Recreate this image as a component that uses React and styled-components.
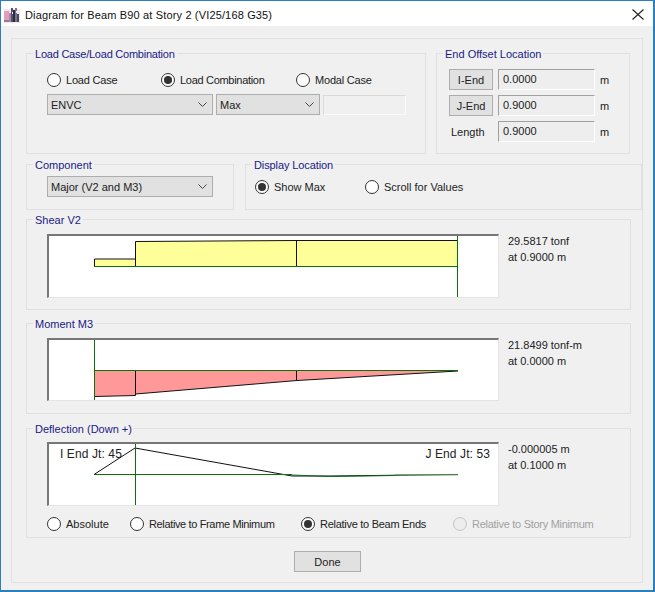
import React from "react";
import styled, { createGlobalStyle } from "styled-components";

const Global = createGlobalStyle`
  html, body { margin: 0; padding: 0; background: #f0f0f0; }
  * { box-sizing: border-box; }
`;

const Window = styled.div`
  width: 655px;
  height: 592px;
  display: flex;
  flex-direction: column;
  background: #f0f0f0;
  border: 1px solid #2b7ec0;
  border-width: 1px 2px 2px 1px;
  font: 11px "Liberation Sans", Arial, sans-serif;
  color: #222;
  overflow: hidden;
  white-space: nowrap;
`;
const TitleBar = styled.div`
  height: 25px;
  flex: none;
  background: #fff;
  display: flex;
  align-items: center;
  padding: 2px 9px 0 3px;
  gap: 5px;
`;
const Title = styled.span`
  flex: 1;
  color: #111;
  letter-spacing: 0.15px;
`;
const Client = styled.div`
  flex: 1;
  padding: 12px 10px 7px 10px;
  display: flex;
`;
const Frame = styled.div`
  flex: 1;
  border: 1px solid #e2e2e2;
  padding: 14px 11px 0 14px;
  display: flex;
  flex-direction: column;
`;
const Row = styled.div`
  display: flex;
  gap: ${(p) => p.$gap ?? 10}px;
  margin-top: ${(p) => p.$top ?? 0}px;
`;
const Group = styled.div`
  position: relative;
  flex: ${(p) => (p.$grow ? 1 : "none")};
  width: ${(p) => (p.$w ? p.$w + "px" : "auto")};
  height: ${(p) => p.$h}px;
  margin-top: ${(p) => p.$top ?? 0}px;
  margin-right: ${(p) => p.$right ?? 0}px;
  border: 1px solid #e0e0e0;
  padding: ${(p) => p.$pad};
`;
const Legend = styled.span`
  position: absolute;
  left: 6px;
  top: -7px;
  padding: 0 2px;
  line-height: 14px;
  background: #f0f0f0;
  color: #1a1a86;
  letter-spacing: ${(p) => p.$spacing ?? 0}px;
`;
const RadioRow = styled.div`
  display: flex;
  height: 14px;
  align-items: center;
  margin-top: ${(p) => p.$top ?? 0}px;
`;
const Option = styled.label`
  display: flex;
  align-items: center;
  gap: 5px;
  width: ${(p) => p.$w}px;
  flex: none;
  color: ${(p) => (p.$off ? "#a0a0a0" : "#222")};
  letter-spacing: ${(p) => p.$spacing ?? 0}px;
`;
const Radio = styled.span`
  width: 14px;
  height: 14px;
  flex: none;
  border-radius: 50%;
  border: 1px solid ${(p) => (p.$off ? "#c4c4c4" : "#333")};
  background: ${(p) => (p.$off ? "#ededed" : "#fff")};
  display: flex;
  align-items: center;
  justify-content: center;
  &::after {
    content: "";
    width: 8px;
    height: 8px;
    border-radius: 50%;
    background: #333;
    display: ${(p) => (p.$on ? "block" : "none")};
  }
`;
const Select = styled.div`
  width: ${(p) => p.$w}px;
  height: 21px;
  flex: none;
  background: #e1e1e1;
  border: 1px solid #adadad;
  display: flex;
  align-items: center;
  justify-content: space-between;
  padding: 0 5px 0 3px;
`;
const ComboRow = styled.div`
  display: flex;
  gap: 3px;
  margin-top: 7px;
`;
const BlankInput = styled.div`
  width: 83px;
  height: 20px;
  margin-top: 1px;
  background: #f0f0f0;
  border: 1px solid #d9d9d9;
  border-right-color: #fafafa;
  border-bottom-color: #fafafa;
`;
const OffsetRow = styled.div`
  display: flex;
  align-items: center;
  height: 21px;
  margin-bottom: 5px;
`;
const EndButton = styled.div`
  width: 44px;
  height: 21px;
  flex: none;
  background: #e1e1e1;
  border: 1px solid #adadad;
  display: flex;
  align-items: center;
  justify-content: center;
  margin-right: 5px;
`;
const RowLabel = styled.span`
  width: 44px;
  margin-right: 5px;
  padding-left: 2px;
`;
const ValueInput = styled.div`
  width: 97px;
  height: 21px;
  flex: none;
  background: #eeeeee;
  border: 1px solid #fff;
  border-top-color: #a0a0a0;
  border-left-color: #a0a0a0;
  padding-left: 4px;
  line-height: 18px;
`;
const Unit = styled.span`
  margin-left: 5px;
`;
const PlotRow = styled.div`
  display: flex;
  gap: 9px;
`;
const Plot = styled.div`
  position: relative;
  width: 452px;
  height: ${(p) => p.$h}px;
  flex: none;
  background: #fff;
  border: 1px solid #e4e4e4;
  border-top: 2px solid #777;
  border-left: 2px solid #777;
`;
const PlotSvg = styled.svg`
  display: block;
  width: 100%;
  height: 100%;
`;
const PlotLabel = styled.span`
  position: absolute;
  top: 3px;
  font-size: 12px;
  line-height: 15px;
  letter-spacing: 0.1px;
  color: #222;
  ${(p) => (p.$right ? "right: 8px;" : "left: 11px;")}
`;
const Values = styled.div`
  line-height: 16px;
  margin-top: -1px;
`;
const Footer = styled.div`
  display: flex;
  justify-content: center;
  margin-top: 13px;
  padding-right: 2px;
`;
const DoneButton = styled.div`
  width: 67px;
  height: 21px;
  background: #e1e1e1;
  border: 1px solid #adadad;
  display: flex;
  align-items: center;
  justify-content: center;
`;

const Chevron = () => (
  <svg width="9" height="5" viewBox="0 0 9 5">
    <path d="M.5 .5 4.5 4.5 8.5 .5" fill="none" stroke="#444" strokeWidth="1" />
  </svg>
);
const AppIcon = () => (
  <svg width="16" height="16" viewBox="0 0 16 16">
    <rect x="0" y="2" width="16" height="14" fill="#f3e6ee" />
    <rect x="0" y="4" width="5" height="9" fill="#e79abb" />
    <rect x="0" y="13" width="5" height="2" fill="#8d7f9c" />
    <rect x="5" y="6" width="2" height="9" fill="#9a90a8" />
    <rect x="7" y="1" width="2" height="14" fill="#55506a" />
    <rect x="9" y="3" width="2" height="12" fill="#2e2c40" />
    <rect x="11" y="1" width="2" height="14" fill="#77748c" />
    <rect x="13" y="7" width="2" height="8" fill="#4a4860" />
    <rect x="8" y="5" width="1" height="2" fill="#f5f1f5" />
    <rect x="12" y="4" width="1" height="2" fill="#f5f1f5" />
  </svg>
);
const CloseIcon = () => (
  <svg width="12" height="11" viewBox="0 0 12 11">
    <path d="M.5 .5 11.5 10.5M11.5 .5 .5 10.5" stroke="#222" strokeWidth="1.1" fill="none" />
  </svg>
);

const Green = "#0b720b";
const ShearChart = () => (
  <PlotSvg viewBox="49 236 449 61" preserveAspectRatio="none">
    <path d="M94.5 259H135.5V241.5L297 240.5H457.5V266.5H94.5Z" fill="#ffff99" />
    <path d="M94.5 266V259H135.5M135.5 266V241.5L297 240.5H457.5M296.5 241V266" fill="none" stroke="#111" />
    <path d="M94 266.5H457.5M457.5 236V297" fill="none" stroke={Green} />
  </PlotSvg>
);
const MomentChart = () => (
  <PlotSvg viewBox="49 340 449 60" preserveAspectRatio="none">
    <path d="M94.5 370.5V396.5L135.5 395.5V394L297 380.5L458 371Z" fill="#ff9999" />
    <path d="M94.5 396.5 135.5 395.5V370.5M135.5 394 297 380.5 458 371M296.5 370.5V381" fill="none" stroke="#111" />
    <path d="M94.5 340V400M94 370.5H458" fill="none" stroke={Green} />
  </PlotSvg>
);
const DeflectionChart = () => (
  <PlotSvg viewBox="49 444 449 61" preserveAspectRatio="none">
    <path d="M94 474.5 135 448 292 476H330L458 474.5" fill="none" stroke="#111" />
    <path d="M135.5 444V505M94 474.5H292" fill="none" stroke={Green} />
    <path d="M292 475 330 476.5 395 475.5" fill="none" stroke="#15691a" strokeWidth="1.2" />
    <path d="M395 474.8H458" fill="none" stroke="#5aa55a" />
  </PlotSvg>
);

const Opt = ({ w, on, off, spacing, children }) => (
  <Option $w={w} $off={off} $spacing={spacing}>
    <Radio $on={on} $off={off} />
    {children}
  </Option>
);

export default function App() {
  return (
    <>
      <Global />
      <Window>
        <TitleBar>
          <AppIcon />
          <Title>Diagram for Beam B90 at Story 2 (VI25/168 G35)</Title>
          <CloseIcon />
        </TitleBar>
        <Client>
          <Frame>
            <Row>
              <Group $w={400} $h={101} $pad="19px 0 0 20px">
                <Legend $spacing={-0.23}>Load Case/Load Combination</Legend>
                <RadioRow>
                  <Opt w={114} spacing={-0.2}>Load Case</Opt>
                  <Opt w={135} on spacing={-0.3}>Load Combination</Opt>
                  <Opt w={110} spacing={-0.2}>Modal Case</Opt>
                </RadioRow>
                <ComboRow>
                  <Select $w={166}>ENVC<Chevron /></Select>
                  <Select $w={104}>Max<Chevron /></Select>
                  <BlankInput />
                </ComboRow>
              </Group>
              <Group $w={194} $h={101} $pad="15px 0 0 12px">
                <Legend>End Offset Location</Legend>
                <OffsetRow>
                  <EndButton>I-End</EndButton>
                  <ValueInput>0.0000</ValueInput>
                  <Unit>m</Unit>
                </OffsetRow>
                <OffsetRow>
                  <EndButton>J-End</EndButton>
                  <ValueInput>0.9000</ValueInput>
                  <Unit>m</Unit>
                </OffsetRow>
                <OffsetRow>
                  <RowLabel>Length</RowLabel>
                  <ValueInput>0.9000</ValueInput>
                  <Unit>m</Unit>
                </OffsetRow>
              </Group>
            </Row>
            <Row $top={10} $gap={11}>
              <Group $w={208} $h={46} $pad="11px 0 0 20px">
                <Legend>Component</Legend>
                <Select $w={166}>Major (V2 and M3)<Chevron /></Select>
              </Group>
              <Group $grow $h={46} $right={-11} $pad="15px 0 0 9px">
                <Legend $spacing={-0.1}>Display Location</Legend>
                <RadioRow>
                  <Opt w={110} on>Show Max</Opt>
                  <Opt w={120}>Scroll for Values</Opt>
                </RadioRow>
              </Group>
            </Row>
            <Group $h={91} $top={9} $pad="14px 0 0 20px">
              <Legend>Shear V2</Legend>
              <PlotRow>
                <Plot $h={64}><ShearChart /></Plot>
                <Values>29.5817 tonf<br />at 0.9000 m</Values>
              </PlotRow>
            </Group>
            <Group $h={91} $top={13} $pad="14px 0 0 20px">
              <Legend>Moment M3</Legend>
              <PlotRow>
                <Plot $h={63}><MomentChart /></Plot>
                <Values>21.8499 tonf-m<br />at 0.0000 m</Values>
              </PlotRow>
            </Group>
            <Group $h={110} $top={14} $pad="13px 0 0 20px">
              <Legend>Deflection (Down +)</Legend>
              <PlotRow>
                <Plot $h={64}>
                  <DeflectionChart />
                  <PlotLabel>I End Jt: 45</PlotLabel>
                  <PlotLabel $right>J End Jt: 53</PlotLabel>
                </Plot>
                <Values>-0.000005 m<br />at 0.1000 m</Values>
              </PlotRow>
              <RadioRow $top={11}>
                <Opt w={83}>Absolute</Opt>
                <Opt w={171} spacing={-0.36}>Relative to Frame Minimum</Opt>
                <Opt w={152} on spacing={-0.28}>Relative to Beam Ends</Opt>
                <Opt w={150} off spacing={-0.28}>Relative to Story Minimum</Opt>
              </RadioRow>
            </Group>
            <Footer>
              <DoneButton>Done</DoneButton>
            </Footer>
          </Frame>
        </Client>
      </Window>
    </>
  );
}
